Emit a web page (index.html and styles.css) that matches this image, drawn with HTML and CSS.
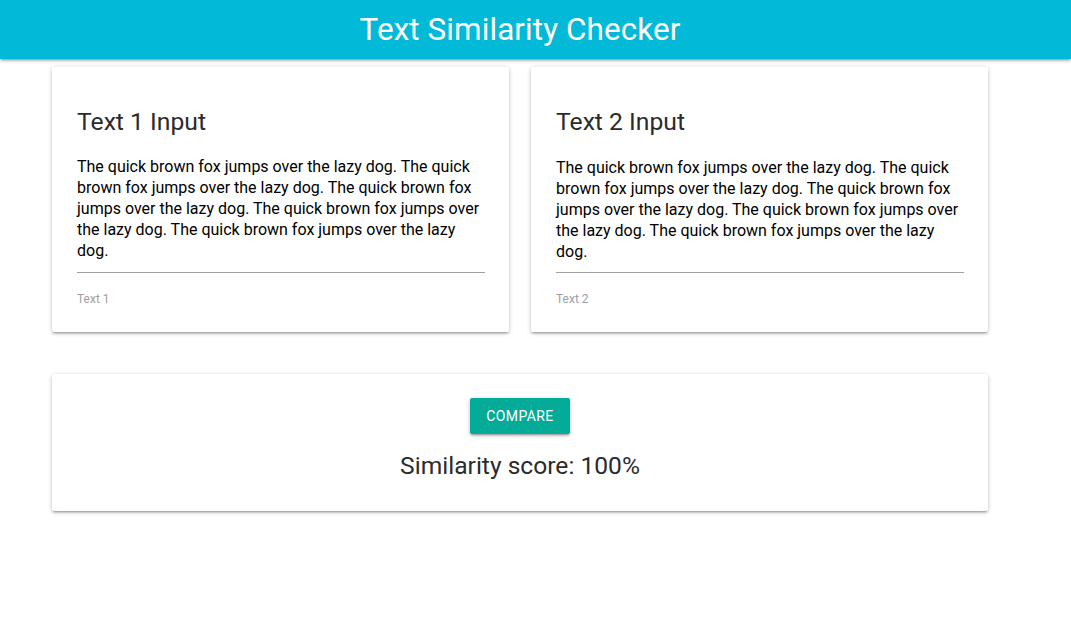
FILE: index.html
```html
<!DOCTYPE html>
<html>
<head>
<meta charset="utf-8">
<link rel="stylesheet" href="styles.css">
</head>
<body>
<header class="topbar">
  <div class="topbar-inner"><h1 class="title">Text Similarity Checker</h1></div>
</header>
<main class="container">
  <div class="inputs">
    <section class="card input-card">
      <h5 class="card-title">Text 1 Input</h5>
      <div class="field">
        <div class="textarea">The quick brown fox jumps over the lazy dog. The quick brown fox jumps over the lazy dog. The quick brown fox jumps over the lazy dog. The quick brown fox jumps over the lazy dog. The quick brown fox jumps over the lazy dog.</div>
        <label class="label">Text 1</label>
      </div>
    </section>
    <section class="card input-card">
      <h5 class="card-title">Text 2 Input</h5>
      <div class="field field-2">
        <div class="textarea">The quick brown fox jumps over the lazy dog. The quick brown fox jumps over the lazy dog. The quick brown fox jumps over the lazy dog. The quick brown fox jumps over the lazy dog. The quick brown fox jumps over the lazy dog.</div>
        <label class="label">Text 2</label>
      </div>
    </section>
  </div>
  <section class="card result-card">
    <button class="btn">COMPARE</button>
    <p class="score">Similarity score: 100%</p>
  </section>
</main>
</body>
</html>
```

FILE: styles.css
```css
* { box-sizing: border-box; }
html, body { margin: 0; padding: 0; background: #fff; }
body {
  font-family: Roboto, "Noto Sans", sans-serif;
  color: rgba(0,0,0,0.87);
  width: 1071px;
  overflow: hidden;
}
.topbar {
  background: #03b9d8;
  height: 59px;
  box-shadow: 0 2px 2px 0 rgba(0,0,0,0.14), 0 3px 1px -2px rgba(0,0,0,0.12), 0 1px 5px 0 rgba(0,0,0,0.2);
  position: relative;
  z-index: 2;
}
.topbar-inner {
  width: 1040px;
  height: 59px;
  display: flex;
  align-items: center;
  justify-content: center;
}
.title {
  margin: 0;
  color: #fff;
  font-weight: 400;
  font-size: 31.4px;
  line-height: 56px;
  letter-spacing: 0.1px;
}
.container {
  width: 936px;
  margin-left: 52px;
  padding-top: 8px;
  padding-bottom: 40px;
}
.inputs {
  display: grid;
  grid-template-columns: 457px 457px;
  column-gap: 22px;
}
.card {
  background: #fff;
  border-radius: 2px;
  box-shadow: 0 2px 2px 0 rgba(0,0,0,0.14), 0 3px 1px -2px rgba(0,0,0,0.12), 0 1px 5px 0 rgba(0,0,0,0.2);
}
.input-card {
  height: 265px;
  padding: 39px 24px 0 25px;
}
.card-title {
  margin: 0;
  font-size: 24.7px;
  font-weight: 400;
  line-height: 32px;
  color: #2b2b2b;
}
.field { margin-top: 18px; }
.field-2 { margin-top: 19px; }
.textarea {
  font-size: 16px;
  line-height: 21px;
  color: #000;
  padding-bottom: 11px;
  border-bottom: 1px solid #9e9e9e;
}
.field-2 .textarea { padding-bottom: 10px; }
.label {
  display: block;
  margin-top: 19px;
  font-size: 12px;
  color: #a0a0a0;
}
.result-card {
  margin-top: 42px;
  height: 137px;
  padding-top: 24px;
  display: flex;
  flex-direction: column;
  align-items: center;
}
.btn {
  width: 100px;
  height: 36px;
  border: none;
  border-radius: 2px;
  background: #03ab98;
  color: #fff;
  font-family: Roboto, sans-serif;
  font-size: 14px;
  letter-spacing: 0.4px;
  padding: 0;
  box-shadow: 0 2px 2px 0 rgba(0,0,0,0.14), 0 3px 1px -2px rgba(0,0,0,0.12), 0 1px 5px 0 rgba(0,0,0,0.2);
}
.score {
  margin: 16px 0 0;
  font-size: 24.6px;
  line-height: 32px;
  color: #2b2b2b;
}
```
